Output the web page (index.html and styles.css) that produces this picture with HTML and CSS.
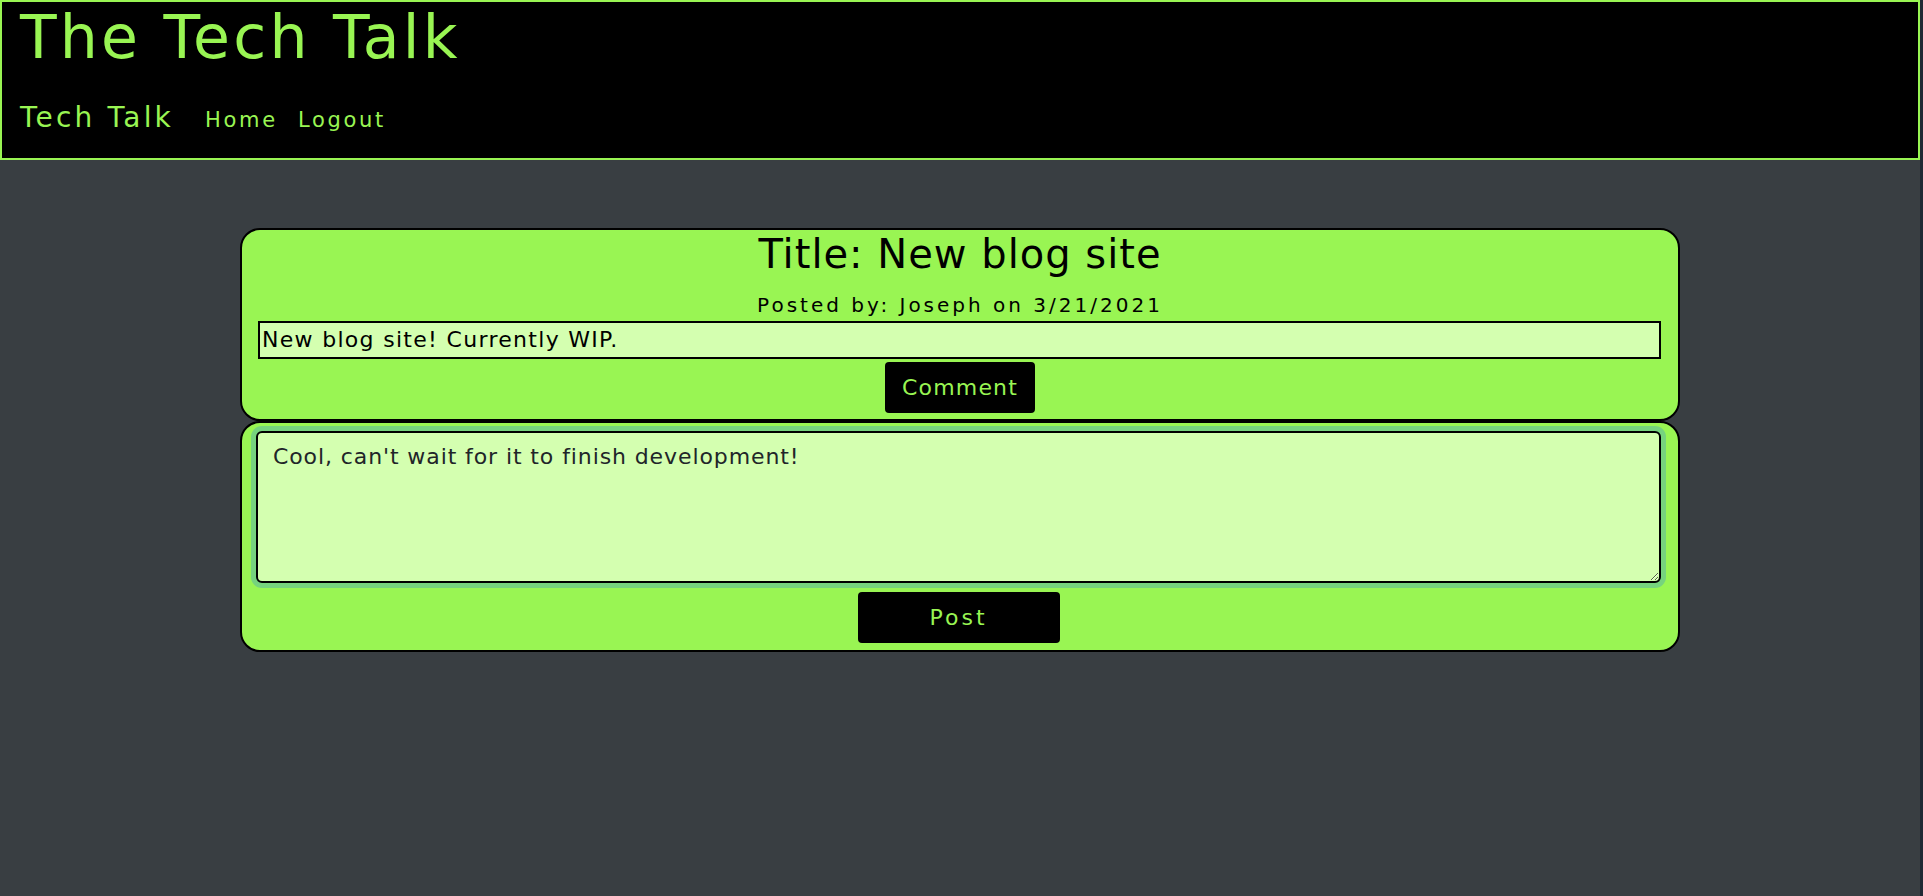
FILE: index.html
```html
<!DOCTYPE html>
<html lang="en">
<head>
<meta charset="utf-8">
<title>The Tech Talk</title>
<link rel="stylesheet" href="styles.css">
</head>
<body>
<div class="page">
  <header class="site-header">
    <h1 class="site-title">The Tech Talk</h1>
    <nav class="nav">
      <a class="brand" href="#">Tech Talk</a>
      <a class="nav-link" href="#">Home</a>
      <a class="nav-link" href="#">Logout</a>
    </nav>
  </header>
  <main class="main">
    <section class="card post-card">
      <h2 class="post-title">Title: New blog site</h2>
      <p class="post-meta">Posted by: Joseph on 3/21/2021</p>
      <div class="post-body">New blog site! Currently WIP.</div>
      <div class="actions"><button class="btn btn-comment">Comment</button></div>
    </section>
    <section class="card comment-card">
      <textarea class="comment-input">Cool, can't wait for it to finish development!</textarea>
      <div class="actions"><button class="btn btn-post">Post</button></div>
    </section>
  </main>
</div>
</body>
</html>
```
FILE: styles.css
```css
html {
  background: #1f2934;
}
body {
  margin: 0 3px 0 0;
  background: #393e42;
  min-height: 896px;
  font-family: "DejaVu Sans", "Liberation Sans", sans-serif;
}
.page {
  display: flex;
  flex-direction: column;
}
.site-header {
  background: #000;
  border: 2px solid #99f553;
  padding: 6px 18px 0;
  box-sizing: content-box;
  height: 150px;
}
.site-title {
  margin: 0;
  font-size: 60px;
  line-height: 58px;
  font-weight: normal;
  letter-spacing: 3.2px;
  color: #99f553;
}
.nav {
  display: flex;
  align-items: baseline;
  margin-top: 35px;
  line-height: 34px;
}
.nav a {
  color: #99f553;
  text-decoration: none;
}
.brand {
  font-size: 28px;
  letter-spacing: 3.2px;
  margin-right: 31px;
}
.nav-link {
  font-size: 21px;
  letter-spacing: 2.7px;
  margin-right: 20px;
}
.main {
  padding-top: 68px;
  display: flex;
  flex-direction: column;
  align-items: center;
}
.card {
  width: 75%;
  box-sizing: border-box;
  background: #99f553;
  border: 2px solid #000;
  border-radius: 20px;
}
.post-card {
  padding: 1px 16px 6px;
  text-align: center;
}
.post-title {
  margin: 0;
  font-size: 40px;
  line-height: 46px;
  font-weight: normal;
  letter-spacing: 1px;
  color: #000;
}
.post-meta {
  margin: 16px 0 0;
  font-size: 20px;
  line-height: 24px;
  letter-spacing: 3px;
  color: #000;
}
.post-body {
  margin-top: 4px;
  margin-right: 1px;
  height: 34px;
  border: 2px solid #000;
  background: #d4ffb0;
  text-align: left;
  padding: 0 2px;
  font-size: 22px;
  line-height: 34px;
  letter-spacing: 1.3px;
  color: #000;
}
.actions {
  display: flex;
  justify-content: center;
}
.btn {
  background: #000;
  color: #99f553;
  border: 0;
  border-radius: 4px;
  font-family: "DejaVu Sans", "Liberation Sans", sans-serif;
  font-size: 22px;
  height: 51px;
  padding: 0;
}
.btn-comment {
  margin-top: 3px;
  width: 150px;
  letter-spacing: 1.2px;
}
.comment-card {
  padding: 8px 17px 7px 14px;
}
.comment-input {
  display: block;
  width: 100%;
  height: 152px;
  box-sizing: border-box;
  background: #d4ffb0;
  border: 2px solid #000;
  border-radius: 6px;
  padding: 7px 15px;
  font-family: "DejaVu Sans", "Liberation Sans", sans-serif;
  font-size: 22px;
  line-height: 33px;
  letter-spacing: 0.9px;
  color: #212529;
  outline: none;
  box-shadow: 0 0 0 5px #76d37e;
}
.btn-post {
  margin-top: 9px;
  width: 202px;
  letter-spacing: 3px;
}
```
